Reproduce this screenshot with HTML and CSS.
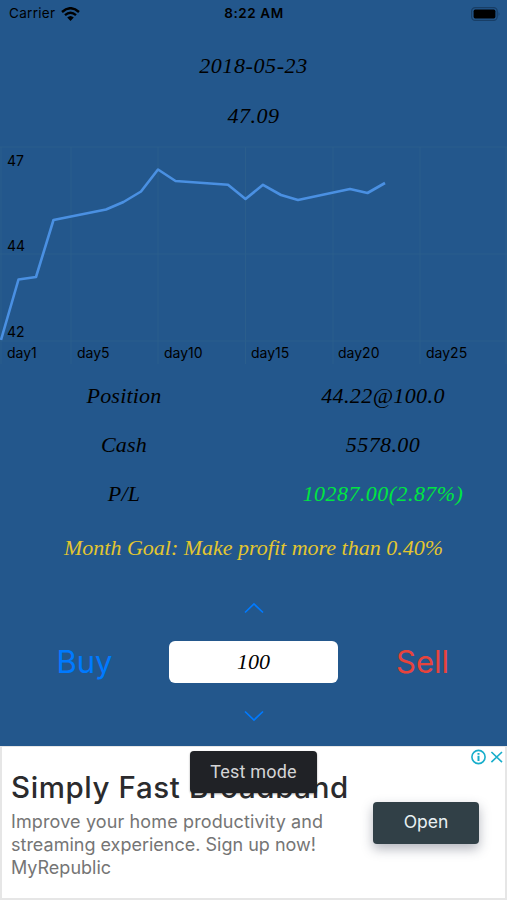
FILE: index.html
```html
<!DOCTYPE html>
<html lang="en">

<head>
    <meta charset="UTF-8">
    <meta name="viewport" content="width=device-width, initial-scale=1.0">
    <title>Trade</title>
    <link rel="stylesheet" href="styles.css">
</head>

<body>
    <div class="app">
        <header class="status">
            <div class="carrier">
                <span>Carrier</span>
                <svg class="wifi" width="19" height="14" viewBox="0 0 19 14">
                    <path d="M1 5Q9.500 -2.600 18 5M4 8.200Q9.500 3.400 15 8.200" fill="none" stroke="#000" stroke-width="2.4" />
                    <path d="M6.200 10.500Q9.500 7.400 12.800 10.500L9.500 14Z" />
                </svg>
            </div>
            <div class="time">8:22 AM</div>
            <svg class="battery" width="30" height="14" viewBox="0 0 30 14">
                <rect x="0.6" y="0.6" width="25.6" height="12.8" rx="3.6" fill="none" stroke="#183e66" stroke-width="1.2" />
                <rect x="2.6" y="2.6" width="21.8" height="8.8" rx="1.6" />
                <path d="M27.6 4.8Q29.4 7 27.6 9.2Z" fill="#183e66" />
            </svg>
        </header>

        <div class="date">2018-05-23</div>
        <div class="price">47.09</div>

        <svg class="chart" width="507" height="227" viewBox="0 0 507 227">
            <path class="grid" d="M1 4V221M71 4V221M158 4V221M245.500 4V221M333 4V221M420 4V221M506 4V221M0 4H507M0 111H507M0 198H507" />
            <polyline class="line" points="1,197 18.500,136.500 36,134 53.500,77 71,73.500 106,66.500 123.500,59 141,48.500 158,26.500 175.500,38 228,41.800 245.500,56 263,41.800 281,52 298,57 350,46 367.500,50 385,40" />
            <text x="7" y="23">47</text>
            <text x="7" y="108">44</text>
            <text x="7" y="194">42</text>
            <text x="7" y="215">day1</text>
            <text x="77" y="215">day5</text>
            <text x="164" y="215">day10</text>
            <text x="251" y="215">day15</text>
            <text x="338" y="215">day20</text>
            <text x="426" y="215">day25</text>
        </svg>

        <div class="account">
            <div class="label">Position</div>
            <div class="value">44.22@100.0</div>
            <div class="label">Cash</div>
            <div class="value">5578.00</div>
            <div class="label">P/L</div>
            <div class="value profit">10287.00(2.87%)</div>
        </div>

        <div class="goal">Month Goal: Make profit more than 0.40%</div>

        <div class="trade">
            <div class="buy">Buy</div>
            <div class="stepper">
                <svg width="20" height="12" viewBox="0 0 20 12">
                    <path d="M1 10.500L10 2L19 10.500" />
                </svg>
                <div class="amount">100</div>
                <svg width="20" height="12" viewBox="0 0 20 12">
                    <path d="M1 1.500L10 10L19 1.500" />
                </svg>
            </div>
            <div class="sell">Sell</div>
        </div>

        <footer class="ad">
            <div class="ad-text">
                <div class="ad-title">Simply Fast Broadband</div>
                <div class="ad-desc">
                    <span class="desc1">Improve your home productivity and</span><br>
                    <span>streaming experience. Sign up now!</span><br>
                    <span>MyRepublic</span>
                </div>
            </div>
            <div class="open">Open</div>
            <div class="test-mode">Test mode</div>
            <svg class="ad-icons" width="34" height="16" viewBox="0 0 34 16">
                <circle cx="7.500" cy="8" r="6.600" />
                <path d="M7.500 6.800V12M7.500 4V5.700" stroke-width="2" />
                <path d="M20.400 3L31 13.200M31 3L20.400 13.200" />
            </svg>
        </footer>
    </div>
</body>

</html>
```
FILE: styles.css
```css
* {
    padding: 0;
    margin: 0;
    box-sizing: border-box;
}

body {
    background: #23578c;
    font-family: Inter, "Liberation Sans", sans-serif;
    color: #000;
}

.app {
    width: 507px;
    height: 900px;
    overflow: hidden;
    display: flex;
    flex-direction: column;
}

/* status bar */
.status {
    height: 27px;
    padding: 0 6px 0 9px;
    display: grid;
    grid-template-columns: 1fr auto 1fr;
    align-items: center;
    font-size: 13.5px;
    line-height: 27px;
}

.carrier {
    display: flex;
    align-items: center;
    gap: 6px;
    letter-spacing: .3px;
}

.time {
    font-weight: 600;
    letter-spacing: .6px;
    padding-right: 2px;
}

.battery {
    justify-self: end;
}

/* quote */
.date,
.price,
.account,
.goal,
.amount {
    font-family: "Liberation Serif", serif;
    font-style: italic;
    font-size: 22px;
    text-align: center;
}

.date {
    height: 50px;
    margin-top: 14px;
    line-height: 49px;
    letter-spacing: .6px;
}

.price {
    height: 52px;
    line-height: 49px;
    letter-spacing: .5px;
}

/* chart */
.chart {
    display: block;
    flex: none;
}

.chart text {
    font-size: 14px;
}

.grid {
    stroke: #2b5e8c;
    stroke-width: 1;
    fill: none;
}

.line {
    stroke: #4a90e2;
    stroke-width: 2.6;
    stroke-linejoin: round;
    fill: none;
}

/* account */
.account {
    display: grid;
    grid-template-columns: 248px 1fr;
    grid-auto-rows: 49px;
    padding-top: 1px;
    line-height: 49px;
}

.label {
    letter-spacing: .2px;
}

.value {
    padding-left: 11px;
    letter-spacing: .4px;
}

.profit {
    color: #00e641;
    letter-spacing: .45px;
}

.goal {
    height: 50px;
    margin-top: 5px;
    line-height: 49px;
    color: #e3c62f;
    letter-spacing: 0;
}

/* trade */
.trade {
    height: 173px;
    padding-top: 4px;
    display: grid;
    grid-template-columns: 169px 169px 169px;
    align-items: center;
    text-align: center;
    font-size: 31px;
}

.buy {
    color: #007aff;
}

.sell {
    color: #e8433c;
}

.stepper {
    height: 120px;
    display: flex;
    flex-direction: column;
    align-items: center;
    justify-content: space-between;
}

.stepper path {
    fill: none;
    stroke: #007aff;
    stroke-width: 1.7;
}

.amount {
    width: 169px;
    height: 42px;
    border-radius: 6px;
    background: #fff;
    line-height: 42px;
}

/* ad banner */
.ad {
    position: relative;
    height: 154px;
    padding: 0 26px 0 9px;
    display: flex;
    justify-content: space-between;
    background: #fff;
    border: 2px solid #e6e6e6;
    border-top-width: 1px;
}

.ad-text {
    padding-top: 22px;
    white-space: nowrap;
}

.ad-title {
    height: 41px;
    line-height: 36px;
    font-size: 29.5px;
    font-weight: 500;
    letter-spacing: .6px;
    color: #2b2b2d;
}

.ad-desc {
    line-height: 23px;
    font-size: 18px;
    color: #757575;
}

.desc1 {
    letter-spacing: .13px;
}

.open {
    width: 106px;
    height: 42px;
    margin-top: 55px;
    border-radius: 4px;
    background: #314047;
    box-shadow: 0 5px 12px rgba(40, 45, 70, .35);
    line-height: 40px;
    text-align: center;
    font-size: 17.5px;
    color: #e9f0f3;
}

.test-mode {
    position: absolute;
    top: 4px;
    left: 188px;
    width: 127px;
    height: 42px;
    border-radius: 4px;
    background: #202226;
    box-shadow: 0 1px 2px rgba(0, 0, 0, .4);
    line-height: 42px;
    text-align: center;
    font-family: Roboto, sans-serif;
    font-size: 18px;
    letter-spacing: .2px;
    color: #d4d5d6;
}

.ad-icons {
    position: absolute;
    top: 2px;
    right: 0;
    fill: none;
    stroke: #18aecb;
    stroke-width: 1.6;
}
```
